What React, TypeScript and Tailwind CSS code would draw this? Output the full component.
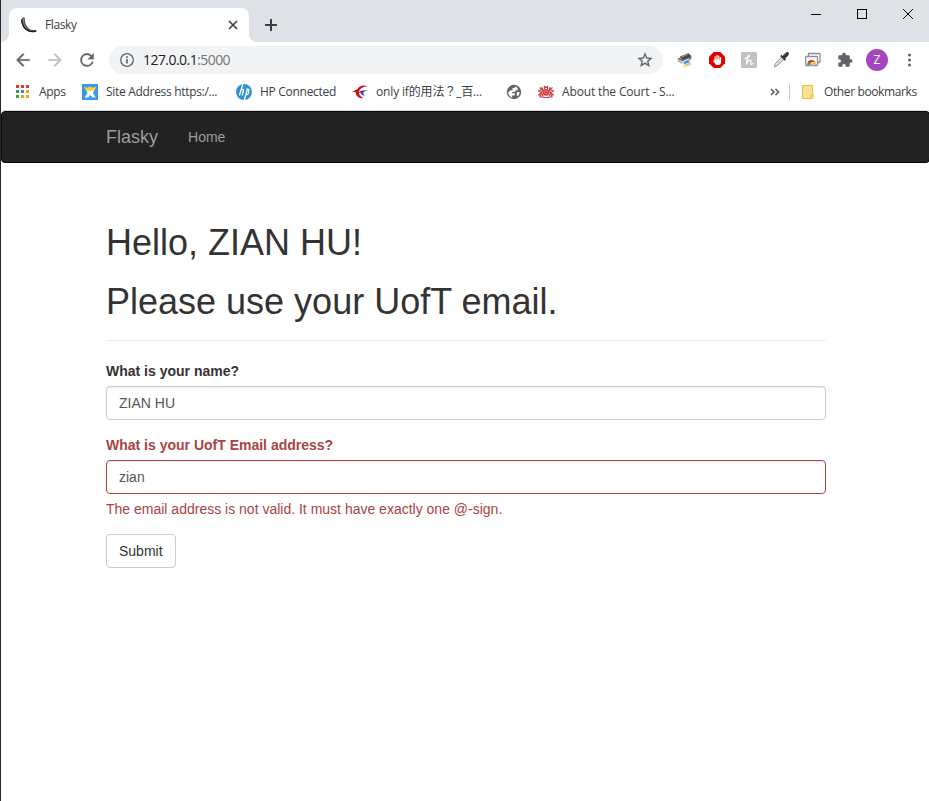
import React from "react";

const UI = "font-['Open_Sans','Noto_Sans_CJK_TC',sans-serif]";

function FlaskIcon() {
  return (
    <svg width="16" height="16" viewBox="0 0 16 16">
      <path d="M.4 2.500 2.400.3l1.800.8-.4 2.500C4 7 6 10.500 9.500 12.400l6.100 1.200C12.500 15.500 7.600 15.200 4.500 12.400 1.800 9.800.5 6 .4 2.500z" fill="#8a8a8a" />
      <path d="M.9 2.300C.8 6 2 9.600 4.900 12.200c2.800 2.300 7 2.900 10.400 1.600" stroke="#1b1b1b" strokeWidth="1.500" fill="none" />
      <path d="M.8 2 2.600.8l1.200.8M3.300 3c-.2 3.500 1.200 6.700 4.400 9" stroke="#333" strokeWidth=".8" fill="none" />
    </svg>
  );
}

function MaterialIcon({ d, color = "#5f6368", size = 20 }: { d: string; color?: string; size?: number }) {
  return (
    <svg className="shrink-0" width={size} height={size} viewBox="0 0 24 24" fill={color} stroke={color} strokeWidth=".3">
      <path d={d} />
    </svg>
  );
}

function TabStrip() {
  return (
    <div className="flex h-[42px] bg-[#dee1e6]">
      <div className="flex w-2 items-end">
        <div className="h-2 w-2 bg-white"><div className="h-2 w-2 rounded-br-lg bg-[#dee1e6]" /></div>
      </div>
      <div className="mt-2 flex h-[34px] w-[240px] items-center rounded-t-lg bg-white pl-3 pr-[10px]">
        <FlaskIcon />
        <span className="ml-2 text-[12px] tracking-[-0.4px] text-[#3c4043]">Flasky</span>
        <svg className="ml-auto" width="12" height="12" viewBox="0 0 12 12" stroke="#3c4043" strokeWidth="1.700"><path d="m2 2 8 8M10 2l-8 8" /></svg>
      </div>
      <div className="flex w-2 items-end">
        <div className="h-2 w-2 bg-white"><div className="h-2 w-2 rounded-bl-lg bg-[#dee1e6]" /></div>
      </div>
      <svg className="ml-[7px] mt-[18px]" width="14" height="14" viewBox="0 0 14 14" stroke="#3c4043" strokeWidth="2"><path d="M7 1v12M1 7h12" /></svg>
      <div className="ml-auto flex gap-9 pr-4 pt-[9px]">
        <svg width="10" height="10" stroke="#000" shapeRendering="crispEdges"><path d="M0 5.500h10" /></svg>
        <svg width="10" height="10" stroke="#000" fill="none" shapeRendering="crispEdges"><path d="M.5.5h9v9h-9z" /></svg>
        <svg width="10" height="10" stroke="#000"><path d="m0 0 10 10M10 0 0 10" /></svg>
      </div>
    </div>
  );
}

function PrinterIcon() {
  return (
    <svg width="16" height="16" viewBox="0 0 16 16">
      <path d="m.8 6.500 9.500-5 4 1.800.2 3.700-5 3-5.200 1.500L1 9.500z" fill="#8b8b8b" />
      <path d="m3 4.500 8.500-3.300L14 4.500 6 8.300z" fill="#4a4a4a" />
      <path d="m4.500 5 6-2.500" stroke="#b09468" strokeWidth="1.200" />
      <path d="m1 6.800 4.500 2-.7 2.200L1.200 9z" fill="#ccc" />
      <path d="m1.200 6.800 4.300 2 8.500-4" stroke="#555" strokeWidth=".8" fill="none" />
      <path d="m5 9.500 6.500-2.700 3.300 6L7 15.500z" fill="#f4f4f4" stroke="#ccc" strokeWidth=".5" />
      <path d="m6.200 10 5.200-2.300 1.300 2.500-5.200 2.100z" fill="#4a96e8" />
      <path d="m7.600 12.800 5-2 .8 1.500-5 1.900z" fill="#f5bd48" />
    </svg>
  );
}

function StopHandIcon() {
  return (
    <svg width="16" height="16" viewBox="0 0 16 16">
      <path d="M4.700 0h6.600L16 4.700v6.600L11.300 16H4.700L0 11.300V4.700z" fill="#df0000" />
      <path d="M6.100 9V4.800M8 8V3.500M9.800 8V4.100M11.500 9V5.500" stroke="#fff" strokeWidth="1.250" strokeLinecap="round" />
      <path d="M5.500 7.500h6.600v2.300c0 2-1.200 3.300-2.800 3.300H8.100c-1 0-1.700-.6-2.200-1.500L3.900 8.600q.2-.9 1.600.2z" fill="#fff" />
    </svg>
  );
}

function HoneyIcon() {
  return (
    <svg width="16" height="16" viewBox="0 0 16 16">
      <rect width="16" height="16" rx="1.500" fill="#c1c1c1" />
      <path d="M4 6.300C6.500 6.200 9 4.500 8.200 3.300 7.300 2.300 6.300 6 5.500 12.300 6.200 9.500 8.300 7.700 9.600 8.200c1.300.7-.5 3.800.4 4.200.7.2 1.300-.3 2-1" fill="none" stroke="#fff" strokeWidth="1.300" strokeLinecap="round" />
    </svg>
  );
}

function DropperIcon() {
  return (
    <svg width="16" height="16" viewBox="0 0 16 16">
      <path d="m8.700 5 2.300 2.300-7 6.400-2.500 1 .6-2.800z" fill="#e1e1e1" stroke="#858585" strokeWidth=".9" />
      <path d="m7.800 3.500 4.700 4.700" stroke="#353535" strokeWidth="1.800" />
      <path d="M9.200 4.500 12 1.200q2.300-2 3.500-.6 1.200 1.500-.8 3.400L11.500 7z" fill="#353535" />
      <path d="m11.500 3 2-1.700" stroke="#888" strokeWidth=".8" />
    </svg>
  );
}

function CastWindowIcon() {
  return (
    <svg width="16" height="16" viewBox="0 0 16 16">
      <path d="M3.500 4.500V2q0-.5.500-.5h10.500q.5 0 .5.500v8q0 .5-.5.500H12.500" fill="#fff" stroke="#909090" strokeWidth="1.300" />
      <rect x=".7" y="4.500" width="11.800" height="9" rx=".7" fill="#fff" stroke="#909090" strokeWidth="1.300" />
      <path d="M2.200 13a4.500 4.500 0 0 1 1.300-3.700L6.700 13z" fill="#2ba24c" />
      <path d="M3 9.500a4.600 4.600 0 0 1 7.400.5H7L5 12z" fill="#e33b2e" />
      <path d="M8 10h2.400q.8 1.400.7 3H7z" fill="#fbc116" />
      <path d="M4.900 13a1.900 1.900 0 0 1 3.700 0z" fill="#3d7fe8" stroke="#fff" strokeWidth=".5" />
    </svg>
  );
}

function Toolbar() {
  return (
    <div className="flex h-9 items-center bg-white">
      <div className="ml-3 flex gap-3">
        <MaterialIcon d="M20 11H7.830l5.590-5.590L12 4l-8 8 8 8 1.410-1.410L7.830 13H20v-2z" />
        <MaterialIcon color="#bdc0c4" d="m12 4-1.410 1.410L16.170 11H4v2h12.170l-5.580 5.590L12 20l8-8z" />
        <MaterialIcon d="M17.650 6.350A7.960 7.960 0 0 0 12 4a8 8 0 1 0 7.730 10h-2.080A6 6 0 1 1 12 6c1.660 0 3.140.69 4.220 1.780L13 11h7V4z" />
      </div>
      <div className="ml-3 flex h-7 w-[554px] items-center rounded-full bg-[#f1f3f4] pl-[10px] pr-[9px]">
        <svg width="16" height="16" viewBox="0 0 16 16" fill="none" stroke="#5f6368"><circle cx="8" cy="8" r="6.300" strokeWidth="1.300" /><path d="M8 7v4.500M8 4.200v1.700" strokeWidth="1.600" /></svg>
        <span className="relative -top-px ml-2 text-[14px] tracking-[-0.55px] text-[#202124]">127.0.0.1<span className="text-[#70757a]">:5000</span></span>
        <span className="ml-auto">
          <MaterialIcon size={18} d="m22 9.240-7.190-.62L12 2 9.190 8.630 2 9.240l5.460 4.730L5.820 21 12 17.270 18.180 21l-1.630-7.030zM12 15.400l-3.760 2.270 1-4.280-3.320-2.880 4.380-.38L12 6.100l1.710 4.040 4.380.38-3.320 2.880 1 4.280z" />
        </span>
      </div>
      <div className="ml-[14px] flex items-center gap-4">
        <PrinterIcon />
        <StopHandIcon />
        <HoneyIcon />
        <DropperIcon />
        <CastWindowIcon />
        <MaterialIcon size={16} d="M20.500 11H19V7a2 2 0 0 0-2-2h-4V3.500a2.500 2.500 0 0 0-5 0V5H4a2 2 0 0 0-1.990 2v3.800H3.500a2.700 2.700 0 0 1 0 5.400H2V20a2 2 0 0 0 2 2h3.800v-1.500a2.700 2.700 0 0 1 5.400 0V22H17a2 2 0 0 0 2-2v-4h1.500a2.500 2.500 0 0 0 0-5z" />
      </div>
      <div className="ml-[13px] flex h-[22px] w-[22px] items-center justify-center rounded-full bg-[#a546bd] text-[12px] text-white">Z</div>
      <svg className="ml-[19px]" width="4" height="16" viewBox="0 0 4 16" fill="#5f6368"><circle cx="2.500" cy="3" r="1.500" /><circle cx="2.500" cy="8" r="1.500" /><circle cx="2.500" cy="13" r="1.500" /></svg>
    </div>
  );
}

const appDots = ["#ea3325", "#ea3325", "#ea3325", "#30a14e", "#3f83f8", "#f0a800", "#30a14e", "#f0a800", "#f0a800"];

function BookmarksBar() {
  return (
    <div className="flex h-8 items-center whitespace-nowrap bg-white pb-[5px] pl-[15px] text-[12px] text-[#3c4043]">
      <div className="grid grid-cols-3 gap-[2px]">
        {appDots.map((color, i) => <i key={i} className="h-[3px] w-[3px]" style={{ backgroundColor: color }} />)}
      </div>
      <span className="ml-[10px] w-[43px] tracking-[-0.3px]">Apps</span>
      <svg width="16" height="16" viewBox="0 0 16 16">
        <path d="M0 0h16v16H0z" fill="#3899ec" />
        <path d="M3.500 5h9.500L11 9l2.700 4.500h-3.500L8.200 11l-2 2.500H2.500L5.500 9z" fill="#fff" />
        <path d="m2 2.500 3.300 1.200L8.200 2.500l2.600 1.200 3.700-1.200Q13 7 8.300 7 3.500 7 2 2.500z" fill="#ffd52a" />
      </svg>
      <span className="ml-2 w-[130px] tracking-[-0.31px]">Site Address https:/...</span>
      <svg width="16" height="16" viewBox="0 0 16 16">
        <circle cx="8" cy="8" r="8" fill="#2c94d6" />
        <path d="M6.800 0 3.400 11.500M5.200 6q2.800-1.300 2.200.8L6.200 11.500M11.500 5 8.300 16M10.300 5.200h1.300q1.800 0 1.200 1.800l-.6 2.600q-.4 1.400-2.700 1.200" fill="none" stroke="#fff" strokeWidth="1.300" />
      </svg>
      <span className="ml-2 w-[92px] tracking-[-0.29px]">HP Connected</span>
      <svg width="16" height="16" viewBox="0 0 16 16">
        <path d="M15.500 2.300C11.500.5 7.500 1.500 5.500 5L0 7.800l3.500.2c.3 4.200 3.500 6.800 8 6.200C8 12.500 6.300 10 7 7.500c.8-3 3.700-4.700 8.500-5.200z" fill="#d90c18" />
        <path d="M15.800 6.500C12 5.800 9 6.800 6.500 8.500l2.200.3c.8 1.700 2.200 2.900 4.300 3.300-1.600-1.300-2.100-2.600-1.400-3.800.7-1 2-1.600 4.200-1.800z" fill="#353b91" />
      </svg>
      <span className="ml-2 w-[130px] tracking-[-0.15px]">only if的用法？_百...</span>
      <svg width="16" height="16" viewBox="0 0 16 16">
        <circle cx="8" cy="8" r="7.200" fill="#5f6368" />
        <path d="M9.800 2.500 8.200 4H6.500v2.200h-2L2.300 8.300v1.200c.5 2 2 3.600 3.800 4.200v-2.200h2.700V9.300H6.300V7.800h3.200V6.200h2.200V4.300z" fill="#fff" />
        <path d="M13.500 8h-2.200l-.8 2.200 1.200 2.100c1.200-1 1.900-2.500 1.800-4.300z" fill="#fff" />
      </svg>
      <svg className="ml-4" width="16" height="16" viewBox="0 0 16 16" fill="none" stroke="#cf3e3e">
        <path d="M6.500 5V2.500L8 3.500l1.500-1V5M1.500 3.500 4 5.500.5 7l3 1.500L.5 11H3l-1 2h4M14.500 3.500 12 5.500 15.500 7l-3 1.500 3 2.500H13l1 2h-4M4 3l.8 3L3.500 9 5 12M12 3l-.8 3 1.300 3-1.500 3M5 13.500h6" strokeWidth="1.200" />
        <circle cx="8" cy="8.300" r="2.700" fill="#dc8585" strokeWidth="1.300" />
        <path d="M6 8.300h4M8 6v5" strokeWidth=".8" />
      </svg>
      <span className="ml-2 tracking-[-0.15px]">About the Court - S...</span>
      <div className="ml-auto flex items-center pr-3">
        <svg width="10" height="8" viewBox="0 0 10 8" fill="none" stroke="#5f6368" strokeWidth="1.700"><path d="m1 1 3 3-3 3M5.500 1l3 3-3 3" /></svg>
        <div className="ml-[9px] h-4 w-px bg-[#cbcdd1]" />
        <svg className="ml-3" width="12" height="14" viewBox="0 0 12 14"><path d="M.5.500h10v13H.500z" fill="#fde293" stroke="#e5c43b" /><path d="M9 10h2.500v2.500l-1 1H9z" fill="#fde293" stroke="#e5c43b" /></svg>
        <span className="ml-[10px] w-[93px] tracking-[-0.38px]">Other bookmarks</span>
      </div>
    </div>
  );
}

export default function App() {
  return (
    <div className="flex h-[801px] w-[929px] overflow-hidden bg-white">
      <div className="w-px shrink-0 bg-[#29292b]" />
      <div className="w-[928px] shrink-0">
        <header className={UI}>
          <TabStrip />
          <Toolbar />
          <BookmarksBar />
          <div className="h-px bg-[#dadce0]" />
        </header>
        <div className="font-['Liberation_Sans',Arial,sans-serif] text-[14px] leading-5 text-[#333]">
          <nav className="-mr-px flex h-[52px] items-center rounded border border-[#080808] bg-[#222] pl-[104px] text-[#9d9d9d]">
            <span className="text-[18px]">Flasky</span>
            <span className="ml-[30px]">Home</span>
          </nav>
          <main className="ml-[105px] w-[720px] pt-[60px]">
            <div className="mb-5 border-b border-[#eee] pb-[19px] text-[36px] leading-[39.6px]">
              <h1>Hello, ZIAN HU!</h1>
              <h1 className="mt-[19px]">Please use your UofT email.</h1>
            </div>
            <label className="mb-[5px] block font-bold">What is your name?</label>
            <div className="mb-[15px] h-[34px] rounded border border-[#ccc] px-3 py-1.5 text-[#555] shadow-[inset_0_1px_1px_rgba(0,0,0,0.075)]">ZIAN HU</div>
            <label className="mb-[5px] block font-bold text-[#a94442]">What is your UofT Email address?</label>
            <div className="h-[34px] rounded border border-[#a94442] px-3 py-1.5 text-[#555] shadow-[inset_0_1px_1px_rgba(0,0,0,0.075)]">zian</div>
            <p className="mb-[15px] mt-[5px] text-[#a94442]">The email address is not valid. It must have exactly one @-sign.</p>
            <button className="h-[34px] rounded border border-[#ccc] px-3 py-1.5 leading-5">Submit</button>
          </main>
        </div>
      </div>
    </div>
  );
}
